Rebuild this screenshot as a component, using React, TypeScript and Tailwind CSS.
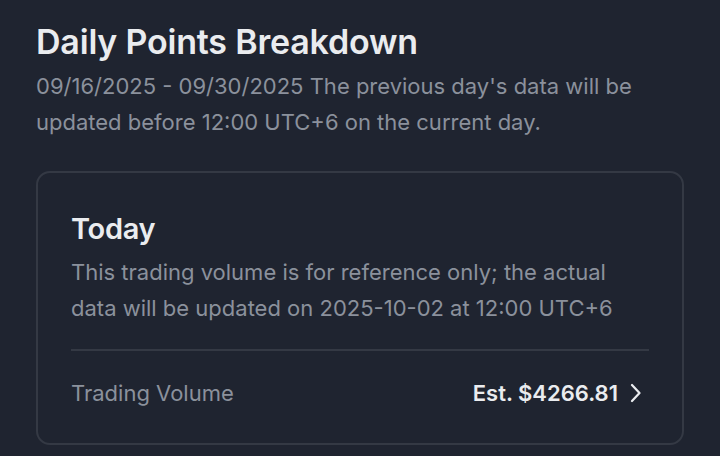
import React from "react";

export default function App() {
  return (
    <div
      className="w-[720px] h-[456px] overflow-hidden bg-[#1f2430] pl-[36px] pr-[36px] pt-[22px]"
      style={{ fontFamily: "Inter, 'Noto Sans', sans-serif" }}
    >
      <h1 className="text-[34px] leading-[40px] font-semibold text-[#eaecef] tracking-[-0.2px]">
        Daily Points Breakdown
      </h1>
      <p className="mt-[6px] text-[22px] leading-[36px] text-[#8b919c]">
        09/16/2025 - 09/30/2025 The previous day's data will be
        <br />
        updated before 12:00 UTC+6 on the current day.
      </p>
      <div className="mt-[31px] rounded-[14px] border-2 border-[#343944] px-[33px] pt-[38px] pb-[8px]">
        <h2 className="text-[29px] leading-[36px] font-semibold text-[#eaecef] tracking-[-0.3px]">Today</h2>
        <p className="mt-[7px] text-[22px] leading-[36px] text-[#8b919c]">
          This trading volume is for reference only; the actual
          <br />
          data will be updated on 2025-10-02 at 12:00 UTC+6
        </p>
        <div className="mt-[23px] h-[2px] bg-[#343944]" />
        <div className="flex items-center justify-between h-[84px]">
          <span className="text-[22px] text-[#8b919c]">Trading Volume</span>
          <span className="mr-[8px] flex items-center gap-[12px] text-[22px] font-semibold text-[#eaecef]">
            Est. $4266.81
            <svg width="11" height="20" viewBox="0 0 11 20" fill="none">
              <path d="M2 2l7.5 8L2 18" stroke="#eaecef" strokeWidth="2.2" strokeLinecap="round" strokeLinejoin="round" />
            </svg>
          </span>
        </div>
      </div>
    </div>
  );
}
